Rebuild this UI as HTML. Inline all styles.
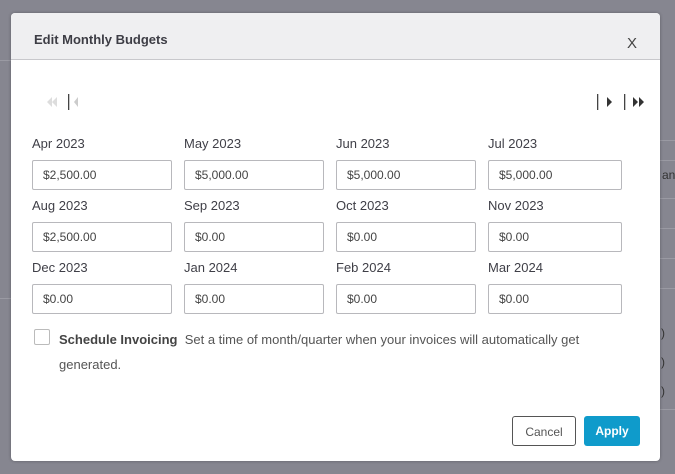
<!DOCTYPE html>
<html><head><style>
body{margin:0;width:675px;height:474px;background:#868690;position:relative;overflow:hidden;font-family:"Liberation Sans",sans-serif;}
.bl{position:absolute;left:660px;width:15px;height:1px;background:#9a9aa3}
.modal{position:absolute;left:11px;top:13px;width:649px;height:448px;background:#fff;border-radius:4px;overflow:hidden;box-shadow:0 0 3px rgba(0,0,0,.3)}
.hdr{height:46px;background:#efeff1;border-bottom:1px solid #c8c8cc;position:relative}
.hdr .t{position:absolute;left:23px;top:19px;font-size:13px;font-weight:bold;color:#3d3d45}
.hdr .x{position:absolute;left:616px;top:22px;font-size:15px;color:#444}
.lab{position:absolute;font-size:13px;color:#3f3f47}
.inp{position:absolute;width:140px;height:30px;border:1px solid #b8b8bc;border-radius:2px;font-size:12px;color:#444;line-height:28px;padding-left:10px;box-sizing:border-box}
.btn{position:absolute;top:403px;height:30px;border-radius:3px;font-size:12px;line-height:30px;text-align:center;box-sizing:border-box}
</style></head><body>
<div class="bl" style="top:140px"></div><div class="bl" style="top:160px"></div><div class="bl" style="top:198px"></div><div class="bl" style="top:228px"></div><div class="bl" style="top:258px"></div><div class="bl" style="top:288px"></div><div class="bl" style="top:409px"></div>
<div style="position:absolute;left:0;top:60px;width:11px;height:1px;background:#9a9aa3"></div>
<div style="position:absolute;left:0;top:298px;width:11px;height:1px;background:#9a9aa3"></div>
<div style="position:absolute;left:662px;top:168px;font-size:12px;color:#333">an</div>
<div style="position:absolute;left:661px;top:326px;font-size:12px;color:#333">)</div>
<div style="position:absolute;left:661px;top:355px;font-size:12px;color:#333">)</div>
<div style="position:absolute;left:661px;top:384px;font-size:12px;color:#333">)</div>
<div class="modal">
<div class="hdr"><span class="t">Edit Monthly Budgets</span><span class="x">X</span></div>
<svg style="position:absolute;left:0;top:0" width="649" height="120">
<path d="M41 84l-5 5 5 5zM46 84l-5 5 5 5z" fill="#ddd"/>
<rect x="57" y="81" width="1.3" height="16" fill="#444"/>
<path d="M67 84l-4 5 4 5z" fill="#ccc"/>
<rect x="586" y="81" width="1.3" height="16" fill="#444"/>
<path d="M596 84l5 5-5 5z" fill="#333"/>
<rect x="613" y="81" width="1.3" height="16" fill="#444"/>
<path d="M622 84l5 5-5 5zM628 84l5 5-5 5z" fill="#333"/>
</svg>
<div class="lab" style="left:21px;top:123px">Apr 2023</div><div class="lab" style="left:173px;top:123px">May 2023</div><div class="lab" style="left:325px;top:123px">Jun 2023</div><div class="lab" style="left:477px;top:123px">Jul 2023</div>
<div class="inp" style="left:21px;top:147px">$2,500.00</div><div class="inp" style="left:173px;top:147px">$5,000.00</div><div class="inp" style="left:325px;top:147px">$5,000.00</div><div class="inp" style="left:477px;top:147px;width:134px">$5,000.00</div>
<div class="lab" style="left:21px;top:185px">Aug 2023</div><div class="lab" style="left:173px;top:185px">Sep 2023</div><div class="lab" style="left:325px;top:185px">Oct 2023</div><div class="lab" style="left:477px;top:185px">Nov 2023</div>
<div class="inp" style="left:21px;top:209px">$2,500.00</div><div class="inp" style="left:173px;top:209px">$0.00</div><div class="inp" style="left:325px;top:209px">$0.00</div><div class="inp" style="left:477px;top:209px;width:134px">$0.00</div>
<div class="lab" style="left:21px;top:247px">Dec 2023</div><div class="lab" style="left:173px;top:247px">Jan 2024</div><div class="lab" style="left:325px;top:247px">Feb 2024</div><div class="lab" style="left:477px;top:247px">Mar 2024</div>
<div class="inp" style="left:21px;top:271px">$0.00</div><div class="inp" style="left:173px;top:271px">$0.00</div><div class="inp" style="left:325px;top:271px">$0.00</div><div class="inp" style="left:477px;top:271px;width:134px">$0.00</div>
<div style="position:absolute;left:23px;top:316px;width:16px;height:16px;border:1px solid #bbb;border-radius:2px;box-sizing:border-box"></div>
<div style="position:absolute;left:48px;top:314px;width:540px;font-size:13px;color:#555;line-height:25px"><b style="color:#444">Schedule Invoicing</b>&nbsp; Set a time of month/quarter when your invoices will automatically get generated.</div>
<div class="btn" style="left:501px;width:64px;border:1px solid #555;color:#555">Cancel</div>
<div class="btn" style="left:573px;width:56px;background:#0f9bcb;color:#fff;font-weight:bold">Apply</div>
</div>
</body></html>
